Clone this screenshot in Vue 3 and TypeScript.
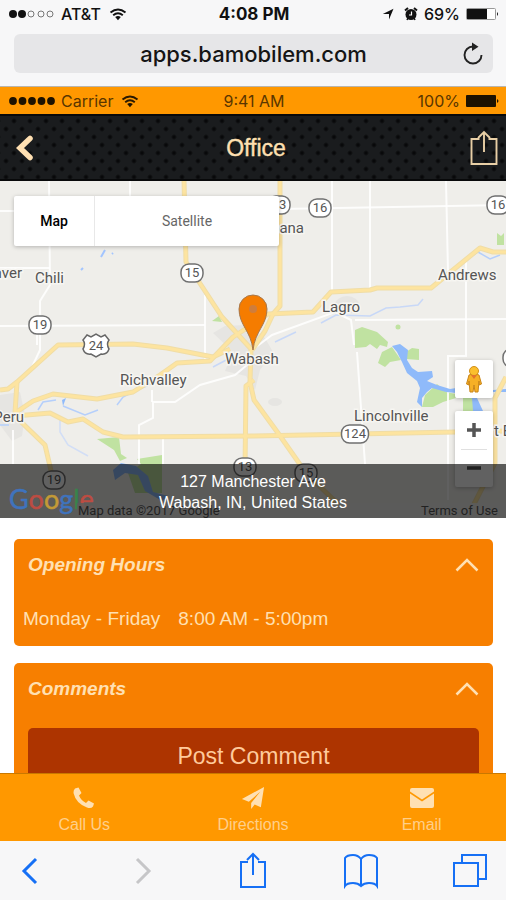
<script setup lang="ts">
import { ref } from 'vue'

interface Place { name: string; x: number; y: number; anchor?: 'start' | 'end' }
interface Shield { label: string; x: number; y: number; w: number }

const address = ref('apps.bamobilem.com')
const mapType = ref<'map' | 'satellite'>('map')
const hoursOpen = ref(true)
const commentsOpen = ref(true)

const places: Place[] = [
  { name: 'Denver', x: 22, y: 278, anchor: 'end' },
  { name: 'Chili', x: 35, y: 283 },
  { name: 'Urbana', x: 304, y: 233, anchor: 'end' },
  { name: 'Andrews', x: 438, y: 280 },
  { name: 'Lagro', x: 322, y: 312 },
  { name: 'Wabash', x: 225, y: 364 },
  { name: 'Richvalley', x: 120, y: 385 },
  { name: 'Peru', x: 24, y: 422, anchor: 'end' },
  { name: 'Lincolnville', x: 354, y: 421 },
  { name: 't Etna', x: 494, y: 436 },
]

const shields: Shield[] = [
  { label: '13', x: 279, y: 205, w: 22 },
  { label: '16', x: 320, y: 208, w: 22 },
  { label: '16', x: 498, y: 205, w: 22 },
  { label: '15', x: 192, y: 273, w: 22 },
  { label: '19', x: 40, y: 325, w: 22 },
  { label: '124', x: 355, y: 434, w: 27 },
  { label: '19', x: 54, y: 480, w: 22 },
  { label: '13', x: 245, y: 467, w: 22 },
  { label: '15', x: 306, y: 473, w: 22 },
]

const highways: string[] = [
  'M184 180L186 262L222 317L252 350',
  'M280 180V306L273 314L265 331L252 350',
  'M0 390L8 389L17 382L58 345L133 344L167 348L213 357L230 349',
  'M17 382L15 413L33 401L53 394L97 399L133 392L160 375L177 363L210 361L233 337L247 328L268 314L313 312L331 292L370 290L377 288H431L453 270L480 248L493 252H506',
  'M15 416L50 413L68 422L83 419L103 432L123 437L253 436L506 431',
  'M15 416L45 445L52 475',
  'M254 380L246 386L245 470',
  'M251 350L250 382L254 400L278 433L306 473L340 506',
  'M506 377L495 398V463L474 504',
]

const roads: string[] = [
  'M49 181L50 285L40 301V350L32 367L17 382',
  'M130 181V196', 'M0 211H49', 'M0 268H50', 'M0 326L205 325', 'M205 295V360',
  'M280 209L506 205', 'M332 181V292', 'M370 181V290', 'M446 181L448 272',
  'M466 262V356H448V500', 'M355 320L506 319', 'M252 350L272 335L335 312L351 320L354 345',
  'M253 360L235 375L200 385L175 402H153V418L139 425V464', 'M152 390V402',
  'M163 437V464', 'M13 430V464', 'M357 352L365 464', 'M37 326V345',
]
</script>

<template>
  <div class="screen">
    <header class="browser-top">
      <div class="status">
        <div class="side">
          <svg class="signal" viewBox="0 0 46 10" aria-hidden="true">
            <circle cx="4" cy="5" r="4" /><circle cx="13" cy="5" r="4" />
            <g fill="none" stroke="#777" stroke-width="1">
              <circle cx="22" cy="5" r="3" /><circle cx="32" cy="5" r="3" /><circle cx="41" cy="5" r="3" />
            </g>
          </svg>
          <span>AT&amp;T</span>
          <svg class="wifi" viewBox="0 0 18 13" aria-hidden="true">
            <path d="M1.500 4.600Q9-1.500 16.500 4.600M4.200 7.300Q9 3.300 13.800 7.300" fill="none" stroke="#111" stroke-width="1.900" />
            <path d="M6.200 9Q9 6.800 11.800 9L9 12.300Z" />
          </svg>
        </div>
        <strong class="clock">4:08 PM</strong>
        <div class="side right">
          <svg class="small-icon" viewBox="0 0 12 12" aria-hidden="true"><path d="M11.500.8L7 11.500V6H.8Z" /></svg>
          <svg class="small-icon alarm" viewBox="0 0 14 14" aria-hidden="true">
            <path d="M1 3.500L4 1M13 3.500L10 1" stroke="#111" stroke-width="2" />
            <circle cx="7" cy="7.500" r="5.500" /><path d="M7.500 4.500V8H5" fill="none" stroke="#fff" stroke-width="1.200" /><path d="M3 13L4 11M11 13L10 11" stroke="#111" stroke-width="1.500" />
          </svg>
          <span>69%</span>
          <svg class="battery" viewBox="0 0 33 12" aria-hidden="true">
            <rect x=".5" y=".5" width="29" height="11" rx="1" fill="#fff" stroke="#999" />
            <rect x="1" y="1" width="20" height="10" fill="#111" /><path d="M31 4Q33 6 31 8Z" />
          </svg>
        </div>
      </div>
      <div class="address-bar">
        <input v-model="address" type="text" aria-label="Address" />
        <button type="button" aria-label="Reload">
          <svg viewBox="0 0 22 24" aria-hidden="true">
            <path d="M11 4.500A8.500 8.500 0 1 0 19.500 13" fill="none" stroke="#222" stroke-width="1.900" />
            <path d="M10 .5L16.500 4.700L10 8.900Z" fill="#222" />
          </svg>
        </button>
      </div>
    </header>

    <div class="status app-status">
      <div class="side">
        <svg class="signal" viewBox="0 0 46 10" aria-hidden="true">
          <circle v-for="n in 5" :key="n" :cx="n * 9.500 - 5.500" cy="5" r="3.900" />
        </svg>
        <span>Carrier</span>
        <svg class="wifi" viewBox="0 0 18 13" aria-hidden="true">
          <path d="M1.500 4.600Q9-1.500 16.500 4.600M4.200 7.300Q9 3.300 13.800 7.300" fill="none" stroke="#2a1a00" stroke-width="1.900" />
          <path d="M6.200 9Q9 6.800 11.800 9L9 12.300Z" />
        </svg>
      </div>
      <span class="clock">9:41 AM</span>
      <div class="side right">
        <span>100%</span>
        <svg class="battery" viewBox="0 0 33 12" aria-hidden="true">
          <rect width="30" height="12" rx="1" /><path d="M31 4Q34 6 31 8Z" />
        </svg>
      </div>
    </div>

    <nav class="app-nav">
      <button type="button" aria-label="Back">
        <svg class="back" viewBox="0 0 18 26" aria-hidden="true"><path d="M14 3.500L4 13L14 22.500" fill="none" stroke="#ffe0b2" stroke-width="5.500" stroke-linecap="round" /></svg>
      </button>
      <h1>Office</h1>
      <button type="button" aria-label="Share">
        <svg class="nav-share" viewBox="0 0 28 36" aria-hidden="true">
          <path d="M9.500 9H1.500V34H26.500V9H18.500M14 22V2M8 8L14 2L20 8" fill="none" stroke="#e8cfa6" stroke-width="1.900" />
        </svg>
      </button>
    </nav>

    <section class="map" aria-label="Map of Wabash">
      <svg class="map-art" viewBox="0 181 506 337" preserveAspectRatio="xMidYMid slice">
        <rect y="181" width="506" height="337" fill="#efeeea" />
        <g fill="#e6e5e2">
          <path d="M213 333L225 326L245 325L265 338L273 352L260 370L255 390L246 376L225 371L233 352Z" />
          <path d="M0 395L20 392L25 415L22 436L12 441L0 425Z" /><ellipse cx="347" cy="305" rx="12" ry="9" /><ellipse cx="275" cy="402" rx="7" ry="4" />
        </g>
        <g fill="#c0e2a1">
          <path d="M355 330L362 327L377 332L388 342L387 347L380 345L377 349L370 344L366 347L355 348Z" /><circle cx="398" cy="327" r="2.500" />
          <path d="M382 352L392 347L401 360L390 362L385 367L378 363Z" /><path d="M406 352L412 348L419 349V360L406 359Z" />
          <path d="M422 407L425 395L437 384L446 392L456 394V398L443 402L433 407Z" /><path d="M463 398H473V411H463Z" />
          <path d="M497 233L501 236L504 233V245H497Z" /><path d="M212 321L219 316L222 322Z" />
          <path d="M97 439L119 437L121 454L127 458L120 461L114 450Z" /><path d="M137 459L162 455V493H135L128 473L141 464Z" />
        </g>
        <g fill="none" stroke="#fff" stroke-width="2" stroke-opacity=".85"><path v-for="d in roads" :key="d" :d="d" /></g>
        <g fill="none" stroke="#b5cffb" stroke-width="1.500">
          <path d="M0 425H9M38 410L43 402L56 400M63 406L85 415L98 410M117 405L123 397L133 392L160 380" />
          <path d="M60 420L60 432L68 445L88 456" stroke="#d2def6" />
          <path d="M213 367L230 358M275 342L296 332M321 323L336 315L370 316L386 308L400 307L418 305L423 299" stroke="#c8d8f7" />
          <path d="M450 274L466 260L478 252L490 259L500 255" /><path d="M101 257L105 250M112 254L113 253M81 270L83 268" stroke="#a3c5ff" stroke-width="2" />
        </g>
        <g fill="#8fbafa">
          <path d="M392 346L400 344L408 350L407 360L412 368L418 372L432 371L433 377L427 381L437 385L450 389L456 388V393L446 392L432 388L427 392L422 398V407L417 402L420 388L417 381L407 373L402 362L397 352Z" />
          <path d="M66 398L63 406L62 400Z" /><path d="M472 398H477L483 411H473Z" /><path d="M493 390L506 389V392H493Z" />
          <path d="M113 470L121 463L136 466L148 476L153 492L168 496L162 501L145 491L138 475L125 473L115 480Z" />
        </g>
        <g fill="none" stroke="#f0dda6" stroke-width="5" stroke-linejoin="round"><path v-for="d in highways" :key="d" :d="d" /></g>
        <g fill="none" stroke="#fde4a0" stroke-width="3" stroke-linejoin="round"><path v-for="d in highways" :key="d" :d="d" /></g>
        <path d="M87 335L91 337L96 334L101 337L105 335L109 340Q106 344 109 349Q107 355 101 354L96 357L91 354Q85 355 83 349Q86 344 83 340Z" fill="#fff" stroke="#666" stroke-width="1.500" />
        <text class="shield-label" x="96" y="350">24</text>
        <rect x="503" y="349" width="22" height="18" rx="8" fill="#fff" stroke="#707070" stroke-width="1.500" />
        <g v-for="(s, i) in shields" :key="i">
          <rect :x="s.x - s.w / 2" :y="s.y - 9" :width="s.w" height="18" rx="8" fill="#fff" stroke="#707070" stroke-width="1.500" />
          <text class="shield-label" :x="s.x" :y="s.y + 4">{{ s.label }}</text>
        </g>
        <text v-for="p in places" :key="p.name" class="place" :x="p.x" :y="p.y" :text-anchor="p.anchor ?? 'start'">{{ p.name }}</text>
        <path d="M253 350C251 331 239 325 239 309A14 14 0 0 1 267 309C267 325 255 331 253 350Z" fill="#f57c00" stroke="#a7784c" />
        <circle cx="253" cy="309" r="4" fill="#cf7d3b" />
      </svg>

      <div class="map-types">
        <button type="button" :class="{ active: mapType === 'map' }" @click="mapType = 'map'">Map</button>
        <button type="button" :class="{ active: mapType === 'satellite' }" @click="mapType = 'satellite'">Satellite</button>
      </div>

      <div class="map-controls">
        <button class="pegman" type="button" aria-label="Street View">
          <svg viewBox="0 0 18 28" aria-hidden="true">
            <path d="M4 10Q9 7 14 10L16.500 19L14 20V16L13 27H10L9 20L8 27H5L4 16V20L1.500 19Z" fill="#f6b026" stroke="#c98518" />
            <circle cx="9" cy="6" r="4.500" fill="#fbbf2d" stroke="#d18f1a" /><path d="M6 10L9 14L12 10Z" fill="#e3742b" />
          </svg>
        </button>
        <div class="zoom">
          <button type="button" aria-label="Zoom in"><svg viewBox="0 0 14 14"><path d="M7 0V14M0 7H14" stroke="#555" stroke-width="3.500" /></svg></button>
          <button type="button" aria-label="Zoom out"><svg viewBox="0 0 14 14"><path d="M0 7H14" stroke="#555" stroke-width="3.500" /></svg></button>
        </div>
      </div>

      <div class="shade"></div>
      <a class="google" href="#" aria-label="Google"><span class="b">G</span><span class="r">o</span><span class="y">o</span><span class="b">g</span><span class="g">l</span><span class="r">e</span></a>
      <div class="credits"><span>Map data ©2017 Google</span><a href="#">Terms of Use</a></div>
      <address>127 Manchester Ave<br />Wabash, IN, United States</address>
    </section>

    <main class="content">
      <section class="card">
        <button class="card-head" type="button" :aria-expanded="hoursOpen" @click="hoursOpen = !hoursOpen">
          <span>Opening Hours</span>
          <svg viewBox="0 0 24 14" aria-hidden="true"><path d="M1.500 12.500L12 2L22.500 12.500" fill="none" stroke="#ffe0b2" stroke-width="2.500" /></svg>
        </button>
        <dl v-if="hoursOpen" class="hours"><dt>Monday - Friday</dt><dd>8:00 AM - 5:00pm</dd></dl>
      </section>
      <section class="card">
        <button class="card-head" type="button" :aria-expanded="commentsOpen" @click="commentsOpen = !commentsOpen">
          <span>Comments</span>
          <svg viewBox="0 0 24 14" aria-hidden="true"><path d="M1.500 12.500L12 2L22.500 12.500" fill="none" stroke="#ffe0b2" stroke-width="2.500" /></svg>
        </button>
        <button v-if="commentsOpen" class="post" type="button">Post Comment</button>
      </section>
    </main>

    <nav class="tabs">
      <a href="#">
        <svg viewBox="0 0 24 24" aria-hidden="true"><path d="M3 2.500L6.500 1.500L9.500 7L7 9.500Q9 14.500 14 17L16.500 14.500L22 17.500L21 20.500Q19 23 15 21.500Q4 17.500 1.500 7Q1.300 4 3 2.500Z" /></svg>
        Call Us
      </a>
      <a href="#">
        <svg viewBox="0 0 26 26" aria-hidden="true"><path d="M25 1L21.500 23L14.800 20L11 25V18.500L21 6L8.500 17L1 14Z" /></svg>
        Directions
      </a>
      <a href="#">
        <svg viewBox="0 0 26 24" aria-hidden="true"><path d="M1 4Q1 2 3 2H23Q25 2 25 4V5.500L13 13.500L1 5.500Z" /><path d="M1 7.500L13 15.500L25 7.500V20Q25 22 23 22H3Q1 22 1 20Z" /></svg>
        Email
      </a>
    </nav>

    <footer class="toolbar">
      <button type="button" aria-label="Previous page"><svg viewBox="0 0 36 36"><path class="thick" d="M20 6L8 18L20 30" /></svg></button>
      <button type="button" aria-label="Next page" disabled><svg viewBox="0 0 36 36"><path class="thick" d="M12 6L24 18L12 30" /></svg></button>
      <button type="button" aria-label="Share page"><svg viewBox="0 0 36 36"><path d="M13 9H6V34H30V9H23M18 22V1M12 7L18 1L24 7" /></svg></button>
      <button type="button" aria-label="Bookmarks"><svg viewBox="0 0 36 36"><path d="M17 6Q14 2 9 2Q3 2 1 5V33Q3 30 9 30Q14 30 17 33Q20 30 25 30Q31 30 33 33V5Q31 2 25 2Q20 2 17 6ZM17 6V33" /></svg></button>
      <button type="button" aria-label="Tabs"><svg viewBox="3 0 36 36"><path d="M1 10H25V33H1ZM9 10V2H33V26H25" transform="translate(3)" /></svg></button>
    </footer>
  </div>
</template>

<style>
body { margin: 0; }
</style>

<style scoped>
.screen {
  display: flex;
  flex-direction: column;
  height: 100vh;
  background: #fff;
  font-family: "Liberation Sans", Arial, sans-serif;
}
button, input { margin: 0; padding: 0; border: 0; background: none; font: inherit; color: inherit; }
button, a { cursor: pointer; }
a { text-decoration: none; color: inherit; }
svg { display: block; flex: none; }

.browser-top { box-sizing: border-box; height: 87px; background: #f7f7f8; border-bottom: 1px solid #b9b5ae; }
.status {
  display: grid;
  grid-template-columns: 1fr auto 1fr;
  align-items: center;
  height: 28px;
  padding: 0 7px 0 9px;
  font: 500 16px/28px Inter, "Liberation Sans", sans-serif;
  color: #111;
  fill: #111;
}
.side { display: flex; align-items: center; gap: 6px; }
.right { justify-content: flex-end; }
.signal { width: 46px; height: 10px; }
.wifi { width: 18px; height: 13px; margin-left: 2px; }
.battery { width: 33px; height: 12px; }
.small-icon { width: 12px; height: 12px; }
.alarm { width: 14px; height: 14px; margin-left: 4px; }
.status strong { font-size: 17px; font-weight: 700; }
.address-bar {
  display: grid;
  grid-template-columns: 1fr 40px;
  height: 39px;
  margin: 6px 13px 0 14px;
  padding-left: 40px;
  border-radius: 6px;
  background: #e6e6e8;
}
.address-bar input { min-width: 0; text-align: center; font: 500 22px/38px Inter, "Liberation Sans", sans-serif; color: #151515; }
.address-bar button { display: grid; place-items: center; }
.address-bar svg { width: 22px; height: 24px; }

.app-status { height: 27px; background: #ff9800; color: #593600; fill: #1d1200; font-weight: 400; }

.app-nav {
  box-sizing: border-box;
  display: grid;
  grid-template-columns: 50px 1fr 44px;
  align-items: center;
  height: 67px;
  border-block: 2px solid #08090a;
  background-color: #1a1c1e;
  background-image: radial-gradient(circle, #08090a 1px, transparent 3px), radial-gradient(circle, #08090a 1px, transparent 3px);
  background-size: 16px 16px;
  background-position: 6px -3px, 14px 5px;
}
.app-nav h1 { margin: 0; text-align: center; font-size: 23px; line-height: 28px; font-weight: 400; color: #ffe0b2; -webkit-text-stroke: 0.4px #ffe0b2; }
.app-nav button { display: grid; place-items: center; height: 60px; }
.back { width: 18px; height: 26px; }
.nav-share { width: 28px; height: 36px; }

.map { position: relative; flex: none; height: 337px; overflow: hidden; font-family: Roboto, sans-serif; }
.map-art { width: 100%; height: 100%; }
.place { font-size: 15px; fill: #555; stroke: #f7f6f2; stroke-width: 3px; paint-order: stroke; }
.shield-label { font-size: 13px; fill: #555; text-anchor: middle; }
.map-types {
  position: absolute;
  top: 15px;
  left: 14px;
  display: grid;
  grid-template-columns: 80px 185px;
  height: 50px;
  background: #fff;
  border-radius: 2px;
  box-shadow: 0 1px 4px rgba(0, 0, 0, 0.25);
  font-size: 14px;
  color: #666;
}
.map-types button + button { border-left: 1px solid #e8e8e8; }
.map-types .active { color: #000; font-weight: 500; }
.map-controls { position: absolute; right: 13px; top: 179px; display: grid; gap: 13px; width: 38px; }
.pegman, .zoom { background: #fff; border-radius: 2px; box-shadow: 0 1px 4px rgba(0, 0, 0, 0.25); }
.pegman { display: grid; place-items: center; height: 38px; }
.pegman svg { width: 18px; height: 28px; }
.zoom button { display: grid; place-items: center; width: 38px; height: 38px; }
.zoom button + button { background: linear-gradient(#e0e0e0, #e0e0e0) center top / 26px 1px no-repeat; }
.zoom svg { width: 14px; height: 14px; }
.shade { position: absolute; inset: auto 0 0; height: 54px; background: rgba(0, 0, 0, 0.62); }
.google { position: absolute; left: 9px; bottom: 2px; font: 27px/34px Lato, sans-serif; }
.google span { -webkit-text-stroke: 0.5px currentColor; }
.b { color: #3f73bd; }
.r { color: #bd4c42; }
.y { color: #c39a36; }
.g { color: #38834b; }
.credits {
  position: absolute;
  inset: auto 0 0 77px;
  display: flex;
  justify-content: space-between;
  height: 15px;
  padding: 0 8px 0 1px;
  background: rgba(92, 92, 90, 0.85);
  font-size: 13px;
  line-height: 16px;
  color: #222;
}
address {
  position: absolute;
  inset: auto 0 5px;
  text-align: center;
  font: 16px/21px "Liberation Sans", Arial, sans-serif;
  color: #fff;
}

.content { flex: 1; min-height: 0; overflow: hidden; padding: 21px 13px 0 14px; }
.card { margin-bottom: 17px; padding: 14px 14px 15px; border-radius: 5px; background: #f77f00; color: #ffe0b2; }
.card-head { display: flex; justify-content: space-between; align-items: center; width: 100%; height: 24px; font-size: 19px; font-weight: 700; font-style: italic; }
.card-head svg { width: 24px; height: 14px; }
.hours { display: flex; gap: 18px; margin: 30px 0 0 -5px; font-size: 19px; line-height: 24px; }
.hours dd { margin: 0; }
.post { width: 100%; height: 56px; margin-top: 27px; border-radius: 5px; background: #ad3400; font-size: 23px; color: #ffca9c; }

.tabs { box-sizing: border-box; display: grid; grid-template-columns: repeat(3, 1fr); flex: none; height: 68px; border-top: 1px solid #c97800; background: #ff9800; }
.tabs a { display: flex; flex-direction: column; align-items: center; gap: 6px; padding-top: 12px; font-size: 16px; line-height: 18px; color: #ffcf8a; }
.tabs svg { width: 26px; height: 24px; fill: #ffe0b2; }
.toolbar { display: flex; flex: none; justify-content: space-between; align-items: center; height: 59px; padding: 0 17px 0 16px; background: #f7f7f8; }
.toolbar svg { width: 36px; height: 36px; overflow: visible; fill: none; stroke: #1670f5; stroke-width: 2px; }
.toolbar .thick { stroke-width: 3px; }
.toolbar button:disabled svg { stroke: #c6c6c8; }
</style>
